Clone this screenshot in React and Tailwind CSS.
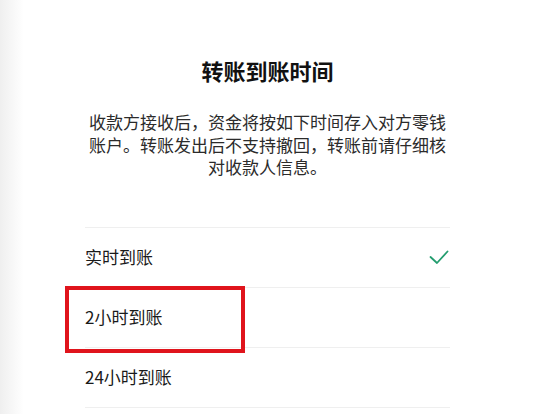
import React from 'react';

const options = [
    { label: '实时到账', checked: true },
    { label: '2小时到账', highlighted: true },
    { label: '24小时到账' },
];

export default function App() {
    return (
        <div
            className="flex w-[550px] h-[414px] overflow-hidden bg-white text-[#1a1a1a]"
            style={{ fontFamily: '"Noto Sans CJK SC", "Noto Sans", sans-serif' }}
        >
            {/* 左侧淡灰边 */}
            <div className="w-[24px] shrink-0 bg-gradient-to-r from-[#efefef] to-white" />

            <div className="pl-[61px] w-[426px]">
                <div className="w-[365px]">
                    <h1 className="pt-[55px] text-center text-[22px] leading-[30px] font-bold text-[#111]">
                        转账到账时间
                    </h1>

                    <p className="mt-[26px] text-center text-[17px] leading-[22.5px] text-[#2b2b2b]">
                        收款方接收后，资金将按如下时间存入对方零钱账户。转账发出后不支持撤回，转账前请仔细核对收款人信息。
                    </p>

                    <ul className="mt-[48px] border-t border-[#efefef]">
                        {options.map((opt) => (
                            <li
                                key={opt.label}
                                className="relative flex items-center justify-between h-[60px] border-b border-[#efefef]"
                            >
                                <span className="text-[17px] text-[#1a1a1a]">{opt.label}</span>

                                {opt.checked && (
                                    <svg className="w-[20px] h-[16px] mr-[1px]" viewBox="0 0 20 16" fill="none">
                                        <path
                                            d="M1.5 8 L8 14 L18.5 2.5"
                                            stroke="#239d6f"
                                            strokeWidth="1.8"
                                            strokeLinecap="round"
                                            strokeLinejoin="round"
                                        />
                                    </svg>
                                )}

                                {opt.highlighted && (
                                    <div className="absolute left-[-20px] top-[-2px] w-[180px] h-[67px] border-[4px] border-[#e0141c] pointer-events-none" />
                                )}
                            </li>
                        ))}
                    </ul>
                </div>
            </div>
        </div>
    );
}
